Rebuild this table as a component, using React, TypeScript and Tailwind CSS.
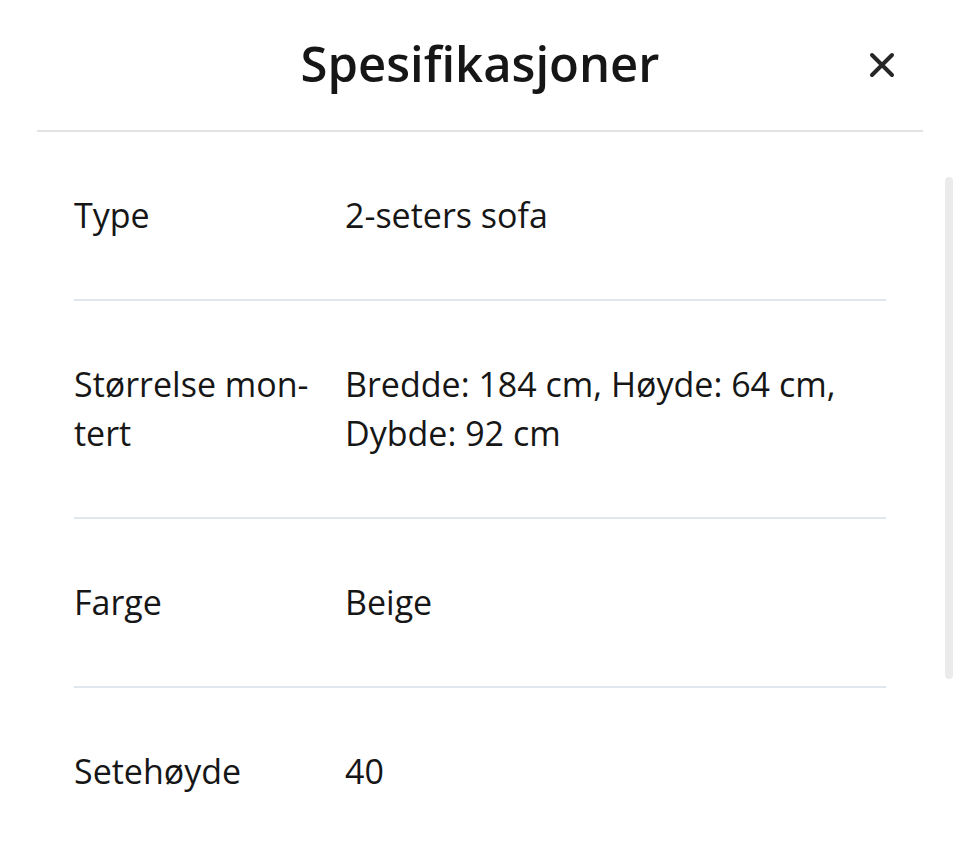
const specs: { label: string; value: string }[] = [
  { label: "Type", value: "2-seters sofa" },
  { label: "Størrelse mon\u00adtert", value: "Bredde: 184 cm, Høyde: 64 cm, Dybde: 92 cm" },
  { label: "Farge", value: "Beige" },
  { label: "Setehøyde", value: "40" },
];

export default function App() {
  return (
    <div className="h-[853px] w-[960px] overflow-hidden bg-white font-['Open_Sans',sans-serif] text-[#161616]">
      {/* HEADER */}
      <div className="relative mx-[37px] flex h-[132px] items-center justify-center border-b-2 border-[#e3e3e3] pb-[4px]">
        <h1 className="text-[49px] font-semibold leading-none">Spesifikasjoner</h1>
        <button className="absolute right-[28px] top-[52px] flex h-[26px] w-[26px] items-center justify-center text-[#262626]">
          <svg width="26" height="26" viewBox="0 0 26 26" fill="none">
            <path d="M3 3L23 23M23 3L3 23" stroke="currentColor" strokeWidth="4" strokeLinecap="round" />
          </svg>
        </button>
      </div>

      {/* BODY */}
      <div className="flex">
        <div className="ml-[74px] w-[812px]">
          {specs.map((s) => (
            <div key={s.label} className="flex border-b-2 border-[#e0e6ed] py-[59px] text-[34px] leading-[49px]">
              <div className="w-[271px] shrink-0 pr-[24px]">{s.label}</div>
              <div className="flex-1 pr-[20px]">{s.value}</div>
            </div>
          ))}
        </div>
        <div className="ml-[59px] mt-[45px] h-[502px] w-[8px] rounded-full bg-[#ebebeb]" />
      </div>
    </div>
  );
}
